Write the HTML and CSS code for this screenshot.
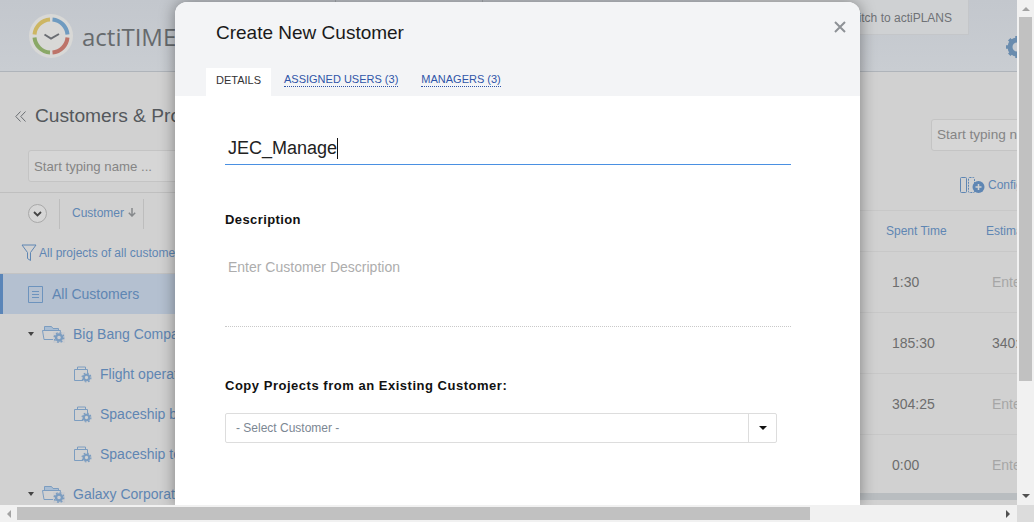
FILE: index.html
```html
<!DOCTYPE html>
<html lang="en">
<head>
    <meta charset="UTF-8">
    <title>actiTIME - Customers &amp; Projects</title>
    <link rel="stylesheet" href="styles.css">
</head>
<body>
<svg class="icon-defs" width="0" height="0">
    <symbol id="gear-small" viewBox="0 0 12 12">
        <circle cx="6" cy="6" r="3" fill="none" stroke="#7c9dc0" stroke-width="2.400"/>
        <circle cx="6" cy="6" r="4.800" fill="none" stroke="#7c9dc0" stroke-width="1.400" stroke-dasharray="1.900 1.870"/>
    </symbol>
    <symbol id="customer-icon" viewBox="0 0 23 18">
        <path d="M2.500 5V1.500H9.500L11 3.500H16.500V6" fill="#a9bdd3" stroke="#7c9dc0"/>
        <path d="M.5 5.500H18.500L17 14.500H2Z" fill="none" stroke="#7c9dc0"/>
        <rect x="11" y="7" width="12" height="11" fill="#cbcccf"/>
        <use href="#gear-small" x="11" y="6.500" width="12" height="12"/>
    </symbol>
    <symbol id="project-icon" viewBox="0 0 18 17">
        <path d="M.5 3.500H13.500V8M9 14.500H.5V3.500M3.500 3.500V1H11.500V3.500" fill="none" stroke="#7c9dc0"/>
        <use href="#gear-small" x="7" y="6" width="11" height="11"/>
    </symbol>
</svg>
<div class="window">
    <div class="viewport">
        <div class="app">
            <header class="topbar">
                <div class="logo">
                    <svg width="48" height="48" viewBox="0 0 48 48">
                        <circle cx="24" cy="24" r="22" fill="#d8d8d6"/>
                        <g fill="none" stroke-width="4">
                            <path d="M23 7.500A16.500 16.500 0 0 0 7.500 22.500" stroke="#cdb662"/>
                            <path d="M25.500 7.500A16.500 16.500 0 0 1 40.500 22.500" stroke="#6f9bc0"/>
                            <path d="M40.500 25.500A16.500 16.500 0 0 1 25.500 40.500" stroke="#bd7469"/>
                            <path d="M23 40.500A16.500 16.500 0 0 1 7.500 25.500" stroke="#8aa866"/>
                        </g>
                        <path d="M17.500 22.500L24 26.500L32 22" fill="none" stroke="#6a6d72" stroke-width="2"/>
                    </svg>
                    <span class="logo-text">actiTIME</span>
                </div>
                <div class="nav-item"></div>
                <div class="switch-tab">Switch to actiPLANS</div>
                <svg class="gear" width="24" height="24" viewBox="0 0 24 24">
                    <circle cx="12" cy="12" r="7" fill="none" stroke="#6a8cae" stroke-width="5"/>
                    <path d="M12 1V23M1 12H23M4.200 4.200L19.800 19.800M19.800 4.200L4.200 19.800" stroke="#6a8cae" stroke-width="3.500" stroke-dasharray="4 14"/>
                </svg>
            </header>

            <div class="content">
                <aside class="left">
                    <h2 class="page-title">
                        <svg class="chevrons" width="11" height="11" viewBox="0 0 11 11"><path d="M5.500 .5L.8 5.500L5.500 10.500M10.500 .5L5.800 5.500L10.500 10.500" fill="none" stroke="#6a6e72"/></svg>
                        <span>Customers &amp; Projects</span>
                    </h2>
                    <div class="search left-search">Start typing name ...</div>
                    <div class="sort-row">
                        <span class="round-toggle">
                            <svg width="9" height="6" viewBox="0 0 9 6"><path d="M1 1L4.500 4.500L8 1" fill="none" stroke="#444" stroke-width="1.800"/></svg>
                        </span>
                        <span class="sort-cell">Customer
                            <svg width="8" height="9" viewBox="0 0 8 9"><path d="M4 0V8M.8 4.800L4 8L7.200 4.800" fill="none" stroke="#85888b" stroke-width="1.500"/></svg>
                        </span>
                    </div>
                    <div class="filter-row">
                        <svg width="16" height="18" viewBox="0 0 16 18"><path d="M1 1H15L9.500 8.500V16.500L6.500 14.500V8.500Z" fill="none" stroke="#5f86b3"/></svg>
                        <span>All projects of all customers</span>
                    </div>
                    <div class="tree-row selected">
                        <svg width="15" height="17" viewBox="0 0 15 17"><path d="M.5 .5H14.500V16.500H.5ZM4 5.500H11M4 8.500H11M4 11.500H11" fill="none" stroke="#6d93bd"/></svg>
                        <span>All Customers</span>
                    </div>
                    <div class="tree-row customer">
                        <span class="caret"></span>
                        <svg class="folder" width="23" height="18"><use href="#customer-icon"/></svg>
                        <span>Big Bang Company</span>
                    </div>
                    <div class="tree-row project">
                        <svg class="folder" width="18" height="17"><use href="#project-icon"/></svg>
                        <span>Flight operations</span>
                    </div>
                    <div class="tree-row project">
                        <svg class="folder" width="18" height="17"><use href="#project-icon"/></svg>
                        <span>Spaceship building</span>
                    </div>
                    <div class="tree-row project">
                        <svg class="folder" width="18" height="17"><use href="#project-icon"/></svg>
                        <span>Spaceship testing</span>
                    </div>
                    <div class="tree-row customer">
                        <span class="caret"></span>
                        <svg class="folder" width="23" height="18"><use href="#customer-icon"/></svg>
                        <span>Galaxy Corporation</span>
                    </div>
                </aside>

                <section class="right">
                    <div class="search right-search">Start typing name ...</div>
                    <div class="config">
                        <svg width="25" height="16" viewBox="0 0 25 16">
                            <rect x=".5" y=".5" width="6" height="15" rx="1" fill="none" stroke="#5f86b3"/>
                            <rect x="8.500" y=".5" width="6" height="15" rx="1" fill="none" stroke="#5f86b3" stroke-dasharray="2 1"/>
                            <circle cx="18.500" cy="10" r="6" fill="#5f86b3"/>
                            <path d="M15.500 10H21.500M18.500 7V13" stroke="#d1d1d1" stroke-width="1.500"/>
                        </svg>
                        <span>Configure</span>
                    </div>
                    <div class="table-row table-head"><span class="col-spent">Spent Time</span><span>Estimate</span></div>
                    <div class="table-row"><span class="col-spent">1:30</span><span class="empty">Enter</span></div>
                    <div class="table-row"><span class="col-spent">185:30</span><span>340:00</span></div>
                    <div class="table-row"><span class="col-spent">304:25</span><span class="empty">Enter</span></div>
                    <div class="table-row last"><span class="col-spent">0:00</span><span class="empty">Enter</span></div>
                    <div class="total-band"></div>
                </section>
            </div>
        </div>

        <div class="modal">
            <div class="modal-head">
                <h1 class="modal-title">Create New Customer</h1>
                <svg class="modal-close" width="12" height="12" viewBox="0 0 12 12"><path d="M1 1L11 11M11 1L1 11" stroke="#8d9196" stroke-width="2"/></svg>
                <div class="tabs">
                    <span class="tab active">DETAILS</span>
                    <span class="tab"><span class="tab-link">ASSIGNED USERS (3)</span></span>
                    <span class="tab"><span class="tab-link">MANAGERS (3)</span></span>
                </div>
            </div>
            <div class="modal-body">
                <div class="name-field">JEC_Manage<span class="text-caret"></span></div>
                <div class="field-label desc-label">Description</div>
                <div class="desc-field">Enter Customer Description</div>
                <div class="field-label copy-label">Copy Projects from an Existing Customer:</div>
                <div class="select">
                    <span class="select-value">- Select Customer -</span>
                    <span class="select-btn"><span class="down-arrow"></span></span>
                </div>
            </div>
        </div>
    </div>

    <div class="scroll-v">
        <span class="arrow-up"></span>
        <div class="thumb-v"></div>
        <span class="arrow-down"></span>
    </div>
    <div class="scroll-h">
        <span class="arrow-left"></span>
        <div class="thumb-h"></div>
        <span class="arrow-right"></span>
    </div>
    <div class="scroll-corner"></div>
</div>
</body>
</html>
```

FILE: styles.css
```css
html, body {
    margin: 0;
    height: 100%;
    overflow: hidden;
}
body {
    font-family: "Liberation Sans", Arial, sans-serif;
    background-color: #d1d1d1;
}
.icon-defs {
    position: absolute;
}
.window {
    display: grid;
    grid-template-columns: 1017px 17px;
    grid-template-rows: 505px 17px;
    width: 1034px;
    height: 522px;
}
.viewport {
    position: relative;
    overflow: hidden;
    background-color: #d1d1d1;
}
.app {
    display: flex;
    flex-direction: column;
    height: 505px;
}

/* top bar */
.topbar {
    display: flex;
    align-items: flex-start;
    flex-shrink: 0;
    height: 71px;
    border-bottom: 1px solid #afb4ba;
    background: linear-gradient(#c3c7cd, #c9cdd2);
}
.logo {
    display: flex;
    align-items: center;
    gap: 7px;
    width: 308px;
    margin: 12px 0 0 27px;
}
.logo-text {
    font-family: "Open Sans", sans-serif;
    font-size: 24px;
    color: #666a6d;
    white-space: nowrap;
}
.nav-item {
    width: 146px;
    height: 35px;
    border-left: 1px solid #a9adb2;
    border-right: 1px solid #a9adb2;
}
.switch-tab {
    margin-left: auto;
    width: 230px;
    height: 35px;
    box-sizing: border-box;
    padding: 11px 16px 0 0;
    background-color: #cfd1d3;
    border: 1px solid #c4c6c9;
    border-top: none;
    font-size: 12px;
    text-align: right;
    color: #6f7276;
}
.gear {
    flex-shrink: 0;
    margin: 35px -12px 0 36px;
}

/* page under the dialog */
.content {
    display: flex;
    flex: 1;
    min-height: 0;
}
.left {
    width: 400px;
    flex-shrink: 0;
    overflow: hidden;
}
.page-title {
    display: flex;
    align-items: center;
    gap: 9px;
    margin: 32px 0 0 15px;
    height: 24px;
    font-size: 19.200px;
    line-height: 24px;
    font-weight: normal;
    color: #54585c;
    white-space: nowrap;
}
.chevrons {
    flex-shrink: 0;
}
.search {
    box-sizing: border-box;
    height: 32px;
    padding: 8px 5px;
    border: 1px solid #c4c4c4;
    border-radius: 3px;
    background-color: #d6d6d6;
    font-size: 13.200px;
    line-height: 15px;
    color: #858585;
    white-space: nowrap;
    overflow: hidden;
}
.left-search {
    margin: 22px 0 0 28px;
    width: 300px;
}
.sort-row {
    display: flex;
    align-items: center;
    height: 41px;
    margin-top: 10px;
    border-top: 1px solid #bfbfbf;
    padding-left: 28px;
}
.round-toggle {
    display: flex;
    align-items: center;
    justify-content: center;
    width: 17px;
    height: 17px;
    border: 1px solid #a9a9a9;
    border-radius: 50%;
    background-color: #d6d6d6;
}
.sort-cell {
    display: flex;
    align-items: center;
    gap: 4px;
    height: 30px;
    margin-left: 12px;
    padding: 0 7px 2px 12px;
    box-sizing: border-box;
    border-left: 1px solid #bdbdbd;
    border-right: 1px solid #bdbdbd;
    font-size: 12px;
    color: #5f86b3;
}
.filter-row {
    display: flex;
    align-items: center;
    gap: 2px;
    height: 38px;
    padding: 0 0 1px 21px;
    border-bottom: 1px solid #c3c3c3;
    font-size: 12px;
    color: #5f86b3;
    white-space: nowrap;
}
.tree-row {
    display: flex;
    align-items: center;
    height: 40px;
    font-size: 14px;
    color: #5f86b3;
    white-space: nowrap;
}
.selected {
    box-sizing: border-box;
    padding-left: 25px;
    gap: 9px;
    border-left: 3px solid #5a85b8;
    background-color: #b4c0d0;
}
.customer {
    padding-left: 28px;
}
.customer .folder {
    margin: 0 8px 0 8px;
}
.project {
    padding-left: 74px;
}
.project .folder {
    margin-right: 8px;
}
.caret {
    width: 0;
    height: 0;
    border-left: 3.500px solid transparent;
    border-right: 3.500px solid transparent;
    border-top: 4px solid #444;
}
.right {
    flex: 1;
    min-width: 0;
    overflow: hidden;
    padding-left: 460px;
}
.right-search {
    width: 200px;
    margin: 47px 0 0 71px;
    padding-top: 7px;
    font-size: 13.600px;
}
.config {
    display: flex;
    align-items: center;
    gap: 3px;
    width: 200px;
    height: 30px;
    margin: 19px 0 10px 100px;
    font-size: 12px;
    color: #5f86b3;
    white-space: nowrap;
}
.config svg {
    flex-shrink: 0;
}
.table-row {
    display: flex;
    align-items: center;
    height: 60px;
    border-bottom: 1px solid #c8c8c8;
    width: 400px;
    font-size: 14px;
    color: #6d6d6d;
}
.table-row.last {
    height: 56px;
    padding-top: 2px;
    border-bottom: none;
}
.table-head {
    height: 40px;
    border-top: 1px solid #c8c8c8;
    font-size: 12px;
    color: #5f86b3;
}
.col-spent {
    width: 100px;
    padding-left: 32px;
    flex-shrink: 0;
}
.table-head .col-spent {
    padding-left: 26px;
}
.empty {
    color: #a6a6a6;
}
.total-band {
    height: 7px;
    background-color: #b9bdc0;
    width: 400px;
}

/* dialog */
.modal {
    position: absolute;
    left: 175px;
    top: 2px;
    width: 685px;
    height: 503px;
    background-color: #fff;
    border-radius: 12px 12px 0 0;
    box-shadow: 0 0 16px rgba(0, 0, 0, 0.4);
}
.modal-head {
    position: relative;
    height: 94px;
    box-sizing: border-box;
    padding: 19px 0 0 31px;
    background-color: #f3f4f6;
    border-radius: 12px 12px 0 0;
}
.modal-title {
    margin: 0 0 0 10px;
    height: 23px;
    font-size: 19px;
    line-height: 23px;
    font-weight: normal;
    color: #1a1a1a;
}
.modal-close {
    position: absolute;
    right: 14px;
    top: 19px;
}
.tabs {
    display: flex;
    margin-top: 24px;
}
.tab {
    display: flex;
    align-items: center;
    box-sizing: border-box;
    height: 28px;
    padding: 0 10px 5px;
    margin-right: 3px;
    font-size: 11px;
}
.tab.active {
    width: 65px;
    background-color: #fff;
    color: #333;
}
.tab-link {
    color: #2f54a8;
    border-bottom: 1px dotted #2f54a8;
    line-height: 13px;
}
.modal-body {
    padding: 0 69px 0 50px;
}
.name-field {
    display: flex;
    align-items: center;
    box-sizing: border-box;
    height: 69px;
    padding: 36px 0 0 3px;
    border-bottom: 1px solid #4a90e2;
    font-size: 18px;
    color: #222;
}
.text-caret {
    width: 1px;
    height: 21px;
    background-color: #111;
}
.field-label {
    font-size: 13px;
    font-weight: bold;
    color: #111;
}
.desc-label {
    margin-top: 47px;
    line-height: 16px;
    letter-spacing: 0.4px;
}
.desc-field {
    box-sizing: border-box;
    height: 99px;
    padding: 31px 0 0 3px;
    border-bottom: 1px dotted #c9c9c9;
    font-size: 14px;
    line-height: 17px;
    color: #adadad;
}
.copy-label {
    margin-top: 51px;
    line-height: 16px;
    letter-spacing: 0.52px;
}
.select {
    display: flex;
    box-sizing: border-box;
    width: 552px;
    height: 30px;
    margin-top: 19px;
    border: 1px solid #ddd;
    border-radius: 2px;
    font-size: 12px;
    color: #7c8793;
}
.select-value {
    flex: 1;
    padding: 7px 10px;
    line-height: 14px;
}
.select-btn {
    display: flex;
    align-items: center;
    justify-content: center;
    width: 27px;
    border-left: 1px solid #ddd;
}
.down-arrow {
    width: 0;
    height: 0;
    border-left: 4px solid transparent;
    border-right: 4px solid transparent;
    border-top: 4px solid #111;
}

/* browser scrollbars */
.scroll-v {
    display: flex;
    flex-direction: column;
    align-items: center;
    background-color: #f1f1f1;
}
.thumb-v {
    width: 13px;
    height: 364px;
    margin-top: 6px;
    background-color: #c1c1c1;
}
.arrow-up,
.arrow-down {
    width: 0;
    height: 0;
    border-left: 4px solid transparent;
    border-right: 4px solid transparent;
}
.arrow-up {
    margin-top: 7px;
    border-bottom: 4px solid #a3a3a3;
}
.arrow-down {
    margin-top: auto;
    margin-bottom: 7px;
    border-top: 4px solid #505050;
}
.scroll-h {
    display: flex;
    align-items: center;
    background-color: #f1f1f1;
}
.thumb-h {
    width: 793px;
    height: 13px;
    margin-left: 6px;
    background-color: #c1c1c1;
}
.arrow-left,
.arrow-right {
    width: 0;
    height: 0;
    border-top: 4px solid transparent;
    border-bottom: 4px solid transparent;
}
.arrow-left {
    margin-left: 7px;
    border-right: 4px solid #a3a3a3;
}
.arrow-right {
    margin-left: auto;
    margin-right: 7px;
    border-left: 4px solid #505050;
}
.scroll-corner {
    background-color: #dcdcdc;
}
```
